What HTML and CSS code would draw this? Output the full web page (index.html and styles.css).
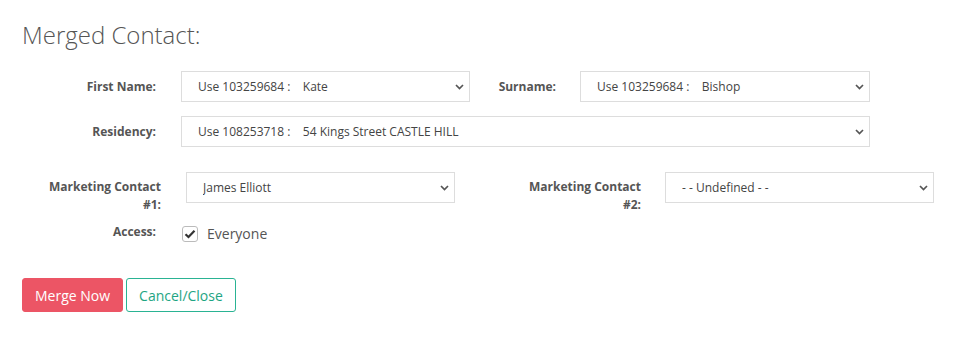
FILE: index.html
```html
<!DOCTYPE html>
<html lang="en">
<head>
    <meta charset="UTF-8">
    <meta name="viewport" content="width=device-width, initial-scale=1.0">
    <title>Merged Contact</title>
    <link rel="stylesheet" href="styles.css">
</head>
<body>
    <div class="merge-panel">
        <h3 class="panel-title">Merged Contact:</h3>

        <form id="merge-form">
            <div class="form-row">
                <label class="control-label" for="first-name">First Name:</label>
                <select id="first-name" class="form-control half">
                    <option>Use 103259684 :&nbsp;&nbsp;&nbsp; Kate</option>
                </select>
                <label class="control-label second" for="surname">Surname:</label>
                <select id="surname" class="form-control half wide">
                    <option>Use 103259684 :&nbsp;&nbsp;&nbsp; Bishop</option>
                </select>
            </div>

            <div class="form-row">
                <label class="control-label" for="residency">Residency:</label>
                <select id="residency" class="form-control full">
                    <option>Use 108253718 :&nbsp;&nbsp;&nbsp; 54 Kings Street CASTLE HILL</option>
                </select>
            </div>

            <div class="form-row marketing">
                <label class="control-label" for="marketing-1">Marketing Contact<br>#1:</label>
                <select id="marketing-1" class="form-control">
                    <option>James Elliott</option>
                </select>
                <label class="control-label second" for="marketing-2">Marketing Contact<br>#2:</label>
                <select id="marketing-2" class="form-control">
                    <option>- - Undefined - -</option>
                </select>
            </div>

            <div class="form-row access">
                <span class="control-label">Access:</span>
                <label class="check">
                    <input type="checkbox" checked>
                    <span class="check-box">
                        <svg width="12" height="10" viewBox="0 0 12 10"><path d="M1.5 5.2 L4.5 8 L10.5 1.8" fill="none" stroke="#333" stroke-width="2.2"/></svg>
                    </span>
                    Everyone
                </label>
            </div>
        </form>

        <div class="actions">
            <button type="button" class="btn btn-danger">Merge Now</button>
            <button type="button" class="btn btn-outline">Cancel/Close</button>
        </div>
    </div>
</body>
</html>
```

FILE: styles.css
```css
body {
    margin: 0;
    font-family: "Open Sans", "Noto Sans", sans-serif;
    color: #555;
    background: #fff;
}
.merge-panel {
    padding: 20px 22px;
}
.panel-title {
    margin: 0 0 21px;
    font-size: 24px;
    font-weight: 300;
    line-height: 30px;
    color: #555;
}
.form-row {
    display: flex;
    align-items: flex-start;
    margin-bottom: 14px;
}
.control-label {
    width: 134px;
    padding-right: 25px;
    padding-top: 7px;
    text-align: right;
    font-size: 12px;
    font-weight: 700;
    line-height: 18px;
    color: #555;
}
.control-label.second {
    width: 86px;
    padding-right: 24px;
}
.form-control {
    height: 31px;
    padding: 0 30px 0 16px;
    border: 1px solid #ddd;
    border-radius: 0;
    background: #fff url("data:image/svg+xml,%3Csvg xmlns='http://www.w3.org/2000/svg' width='9' height='6' viewBox='0 0 9 6'%3E%3Cpath d='M1 1l3.5 3.5L8 1' fill='none' stroke='%23555' stroke-width='1.7'/%3E%3C/svg%3E") no-repeat right 5px center;
    -webkit-appearance: none;
    appearance: none;
    font-family: inherit;
    font-size: 12px;
    color: #444;
}
.form-control.half {
    width: 289px;
}
.form-control.wide {
    width: 290px;
}
.form-control.full {
    width: 689px;
}
.marketing {
    margin-top: 25px;
    margin-bottom: 9px;
}
.marketing .control-label {
    width: 139px;
    padding-top: 6px;
}
.marketing .control-label.second {
    width: 186px;
}
.marketing .form-control {
    width: 269px;
}
.access {
    margin-bottom: 0;
}
.access .control-label {
    padding-top: 0;
}
.check {
    display: flex;
    align-items: center;
    gap: 9px;
    margin-top: 1px;
    margin-left: 1px;
    font-size: 14px;
    color: #555;
    cursor: pointer;
}
.check input {
    display: none;
}
.check-box {
    width: 14px;
    height: 14px;
    border: 1px solid #bbb;
    border-radius: 3px;
    display: flex;
    align-items: center;
    justify-content: center;
    background: #fff;
}
.actions {
    display: flex;
    gap: 3px;
    margin-top: 35px;
}
.btn {
    height: 34px;
    padding: 0 12px;
    border-radius: 3px;
    font-family: inherit;
    font-size: 14px;
    cursor: pointer;
}
.btn-danger {
    background: #ec5565;
    border: 1px solid #ec5565;
    color: #fff;
}
.btn-outline {
    background: #fff;
    border: 1px solid #2ab393;
    color: #1ea583;
}
```
